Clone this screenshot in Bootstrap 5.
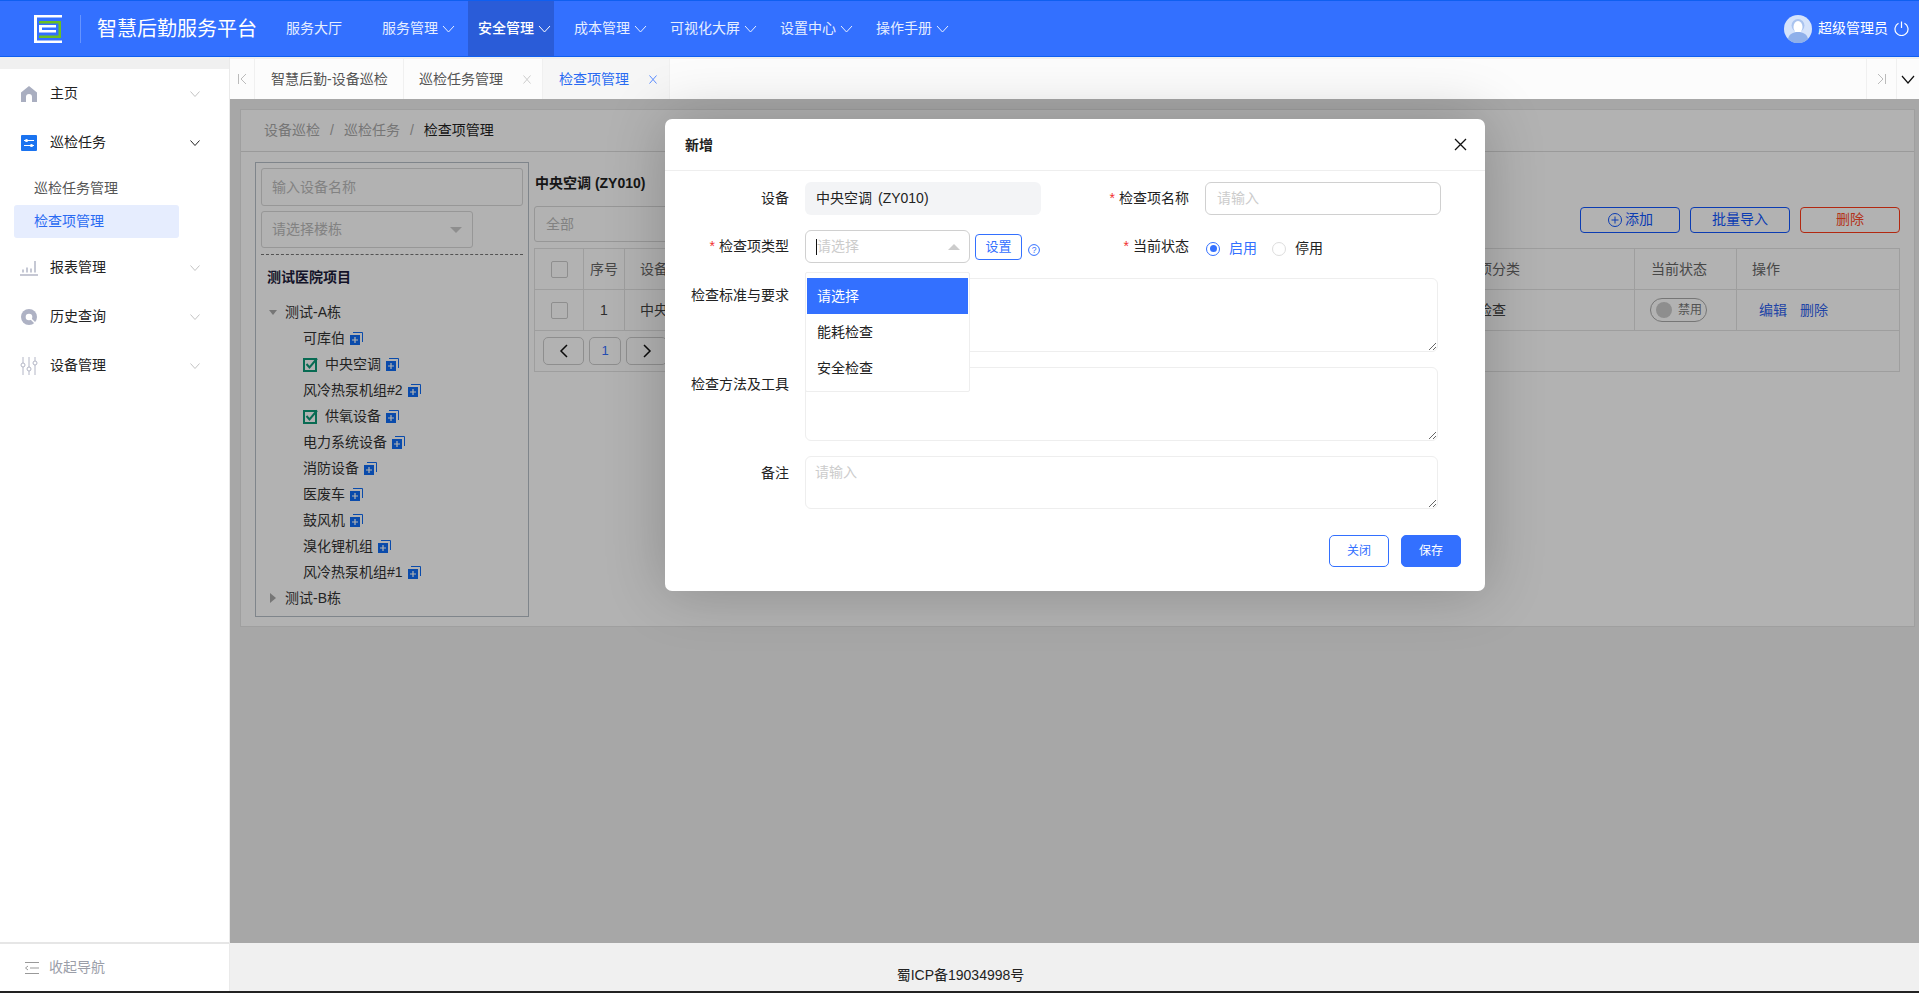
<!doctype html>
<html lang="zh">
<head>
<meta charset="utf-8">
<title>智慧后勤服务平台</title>
<link rel="stylesheet" href="https://cdn.jsdelivr.net/npm/bootstrap@5.3.0/dist/css/bootstrap.min.css">
<style>
html,body{height:100%;overflow:hidden}
body{font-family:"Liberation Sans","Noto Sans CJK SC",sans-serif;font-size:14px;color:#333;background:#f0f0f0;display:flex;flex-direction:column;border-bottom:2px solid #222}
svg{display:block;flex:none}
.topbar{height:57px;flex:none;background:#3370ff;border-top:1px solid #0f5ff0;border-bottom:1px solid #0f5ff0;color:#fff;padding:0 10px 0 34px;display:flex;align-items:center}
.brand-sep{width:1px;height:28px;background:rgba(255,255,255,.25);margin:0 16px 0 18px}
.brand-name{font-size:20px;line-height:28px;white-space:nowrap;margin-right:19px}
.top-item{height:55px;display:flex;align-items:center;gap:4px;padding:0 3px 0 10px;margin-right:10px;color:#e6eeff;white-space:nowrap}
.top-item svg{width:13px;height:8px}
.top-plain{width:86px}
.top-item.is-on{background:#2a5cd8;color:#fff;font-weight:500}
.top-user{margin-left:auto;display:flex;align-items:center;gap:6px}
.shell{flex:1;min-height:0;display:flex}
.side{width:230px;flex:none;display:flex;flex-direction:column;padding-top:12px;background:#f0f0f0;border-right:1px solid #eaeaea}
.side-body{flex:1;background:#fff}
.side-row{height:49px;display:flex;align-items:center;padding:0 29px 0 21px;color:#222;gap:13px}
.side-row span{flex:1}
.side-row .chev{width:10px;height:6px}
.side-row .ico-wide{margin:0 -1px}
.side-sub{height:33px;margin:0 50px 0 14px;padding-left:20px;display:flex;align-items:center;color:#555;border-radius:3px}
.side-sub.sub-first{margin-top:5px}
.side-sub.is-on{background:#e6edfe;color:#2a6bf2}
.side-after{margin-top:5px}
.side-foot{height:49px;background:#fff;border-top:2px solid #e6e6e6;display:flex;align-items:center;padding-left:24px;gap:9px;color:#9b9ea8;flex:none}
.work{flex:1;min-width:0;display:flex;flex-direction:column}
.tabbar{height:40px;flex:none;margin-top:2px;background:#fcfcfc;display:flex;align-items:stretch;color:#555}
.tab-edge{width:25px;display:flex;align-items:center;justify-content:center;border-right:1px solid #f0f0f0}
.tab-cell{display:flex;align-items:center;border-right:1px solid #f0f0f0;white-space:nowrap}
.tab-a{width:149px;padding-left:16px}
.tab-b{width:139px;padding-left:15px;gap:20px}
.tab-c{width:127px;padding-left:16px;gap:20px;background:#f6f6f6;color:#2a6bf2}
.tab-tail{margin-left:auto;display:flex}
.tab-tail>div{width:30px;display:flex;align-items:center;justify-content:center;border-left:1px solid #f0f0f0}
.tab-tail>div+div{width:23px}
.stage{flex:1;min-height:0;position:relative;padding:10px 4px 0 10px;background:#f0f0f0}
.dim{position:absolute;inset:0;background:rgba(0,0,0,.3)}
.panel{height:518px;background:#fff;border:1px solid #e4e4e4;display:flex;flex-direction:column}
.crumbs{height:42px;flex:none;border-bottom:1px solid #ddd;display:flex;align-items:center;padding-left:23px;color:#aaa;gap:10px}
.crumbs b{font-weight:400;color:#222}
.panel-main{display:flex;flex:1;padding:10px 15px 0 14px;gap:5px}
.tree{width:274px;height:455px;flex:none;border:1px solid #b6bfc7;padding:5px;font-size:14px;color:#333}
.fake-input{height:38px;border:1px solid #d8d8d8;border-radius:3px;padding:0 10px;display:flex;align-items:center;color:#bbb}
.fake-select{width:212px;margin-top:5px;height:37px;justify-content:space-between;padding-right:10px}
.tri{width:0;height:0;border-left:6px solid transparent;border-right:6px solid transparent;border-bottom:6px solid #ccc}
.tri-d{border-bottom:0;border-top:6px solid #ccc}
.tree-sep{border-top:1px dashed #777;margin-top:6px}
.tree-root{font-weight:700;color:#1c1c3a;margin:12px 0 0 6px;line-height:20px}
.tree-list{margin:12px 0 0 0;padding:0;list-style:none}
.tree-list li{height:26px;display:flex;align-items:center;padding-left:42px;gap:5px;white-space:nowrap}
.tree-list li.tree-top{padding-left:8px;gap:8px}
.tree-list li .txt-gap{margin-left:2px}
.add-ico{margin-top:1px}
.gridside{flex:1;min-width:0}
.grid-title{font-weight:700;color:#222;line-height:20px;margin-top:11px;margin-left:1px}
.grid-bar{display:flex;align-items:center;height:36px;margin-top:13px;position:relative}
.grid-filter{width:400px;height:36px;border:1px solid #d8d8d8;border-radius:3px;padding-left:11px;display:flex;align-items:center;color:#bbb}
.grid-btns{margin-left:auto;display:flex;gap:10px;margin-top:-9px;margin-right:-1px}
.act{width:100px;height:26px;padding:0;font-size:14px;border-radius:4px;display:flex;align-items:center;justify-content:center;gap:2px;background:transparent;border:1px solid #1056ff;color:#1056ff}
.act-del{border-color:#ff3a18;color:#ff4a2a}
.gridtable{table-layout:fixed;width:1365px;border-collapse:collapse;margin:6px 0 0 0;color:#444}
.gridtable th,.gridtable td{border:1px solid #e2e2e2;height:41px;padding:0;font-weight:400;vertical-align:middle;white-space:nowrap;overflow:hidden}
.gridtable th{color:#666}
.gridtable .chk{width:17px;height:17px;border:1px solid #ccc;border-radius:2px;margin:auto}
.pad-l{padding-left:15px!important}
.switchy{width:57px;height:24px;border:1px solid #aaa;border-radius:12px;display:flex;align-items:center;padding-left:5px;gap:6px;font-size:12px;color:#777;margin-left:15px}
.switchy i{width:16px;height:16px;border-radius:50%;background:#ccc}
.lnk{color:#2f62ee;text-decoration:none}
.lnk+.lnk{margin-left:13px}
.op-links{margin-left:22px}
.pgr{display:flex;gap:5px;padding-left:8px;align-items:center}
.pgr span{height:28px;border:1px solid #ccc;border-radius:5px;display:flex;align-items:center;justify-content:center}
.pgr .wide{width:41px}
.pgr .nar{width:32px;color:#3370ff;font-size:13px}
.site-foot{height:48px;flex:none;background:#f0f0f0;color:#222;display:flex;align-items:flex-end;justify-content:center;padding:0 0 6px 0;font-size:14px;line-height:20px}
.site-foot span{transform:translateX(-114px)}
.dlg.modal-content{position:absolute;left:435px;top:20px;width:820px;height:472px;border:0;border-radius:7px;background:#fff;box-shadow:0 0 60px rgba(0,0,0,.22);color:#222}
.dlg .modal-header{height:52px;padding:0 18px 0 20px;border-bottom:1px solid #eee;display:flex;justify-content:space-between;align-items:center}
.dlg .modal-title{font-size:14px;font-weight:700;line-height:20px;color:#222}
.x-btn{background:none;border:0;padding:0}
.dlg .modal-body{padding:0;position:relative}
.frow{display:flex;margin-top:15px}
.frow.first{margin-top:11px}
.flab{width:124px;flex:none;text-align:right;white-space:nowrap}
.flab em{color:#f23030;font-style:normal;margin-right:4px}
.fslot{margin-left:16px}
.field{height:33px;width:236px;border-radius:6px;display:flex;align-items:center;padding:0 11px}
.field-ro{background:#f3f4f6;color:#222;gap:6px}
.field-in{border:1px solid #d0d0d0;color:#ccc}
.col-a{display:flex;align-items:center;width:400px}
.col-b{display:flex;align-items:center}
.sel{width:165px;height:33px;border:1px solid #d0d0d0;border-radius:6px;display:flex;align-items:center;justify-content:space-between;padding:0 9px 0 11px;color:#ccc}
.caret-bar{width:1px;height:16px;background:#111;position:absolute;margin-left:-1px}
.setbtn{width:47px;height:26px;margin-left:5px;padding:0;font-size:13px;border:1px solid #3370ff;color:#3370ff;background:#fff;border-radius:4px;line-height:24px}
.help-ico{margin:6px 0 0 6px}
.radio-set{display:flex;align-items:center;gap:9px;margin-left:17px;padding-top:4px;color:#222}
.radio-set .on{color:#3370ff}
.dot{width:14px;height:14px;border:1px solid #ddd;border-radius:50%;flex:none;display:flex;align-items:center;justify-content:center}
.dot.off{margin-left:6px}
.dot.is-on{border-color:#3370ff}
.dot.is-on::after{content:"";width:7px;height:7px;background:#3370ff;border-radius:50%}
.ta{width:633px;resize:vertical;border:1px solid #eee;border-radius:6px;padding:5px 9px;display:block;font-size:14px;outline:0;box-shadow:none}
.ta::placeholder{color:#ccc}
.ta-a{height:74px}
.ta-b{height:53px}
.flab-t{padding-top:7px}
.dd{position:absolute;left:140px;top:101px;width:165px;height:120px;background:#fff;border:1px solid #eee;border-radius:2px;padding:5px 0;margin:0;list-style:none;color:#222;z-index:3}
.dd li{height:36px;display:flex;align-items:center;padding-left:11px}
.dd li.is-on{background:#3370ff;color:#fff;margin:0 1px;padding-left:10px}
.dlg .modal-footer{position:absolute;left:0;right:0;bottom:24px;padding:0 24px 0 0;border:0;gap:12px;display:flex;justify-content:flex-end}
.dlg .modal-footer .btn{width:60px;height:32px;margin:0;padding:0;font-size:12px;border-radius:5px}
.btn-line{border:1px solid #3370ff;background:#fff;color:#3370ff}
.btn-fill{border:1px solid #3370ff;background:#3370ff;color:#fff}
</style>
</head>
<body>
<header class="topbar">
  <svg width="28" height="28" viewBox="0 0 28 28"><path d="M0 0H28V2.500H3V25.500H28V28H0Z" fill="#fff"/><path d="M5 6H27V23H5V20.500H24.500V8.500H5Z" fill="#6cc01f"/><path d="M5 10H22V12.500H8V15H22V17.500H5Z" fill="#fff"/></svg>
  <div class="brand-sep"></div>
  <div class="brand-name">智慧后勤服务平台</div>
  <div class="top-item top-plain">服务大厅</div>
  <div class="top-item">服务管理<svg viewBox="0 0 13 8"><path d="M1 1l5.500 6L12 1" fill="none" stroke="#e6eeff"/></svg></div>
  <div class="top-item is-on">安全管理<svg viewBox="0 0 13 8"><path d="M1 1l5.500 6L12 1" fill="none" stroke="#fff"/></svg></div>
  <div class="top-item">成本管理<svg viewBox="0 0 13 8"><path d="M1 1l5.500 6L12 1" fill="none" stroke="#e6eeff"/></svg></div>
  <div class="top-item">可视化大屏<svg viewBox="0 0 13 8"><path d="M1 1l5.500 6L12 1" fill="none" stroke="#e6eeff"/></svg></div>
  <div class="top-item">设置中心<svg viewBox="0 0 13 8"><path d="M1 1l5.500 6L12 1" fill="none" stroke="#e6eeff"/></svg></div>
  <div class="top-item">操作手册<svg viewBox="0 0 13 8"><path d="M1 1l5.500 6L12 1" fill="none" stroke="#e6eeff"/></svg></div>
  <div class="top-user">
    <svg width="28" height="28" viewBox="0 0 28 28"><circle cx="14" cy="14" r="14" fill="#d5e3fb"/><ellipse cx="14" cy="10.500" rx="6.500" ry="6.500" fill="#a9c3ef"/><ellipse cx="14" cy="12" rx="4.500" ry="6" fill="#fff"/><path d="M4 24c1-5 5-7 10-7s9 2 10 7a14 14 0 0 1-20 0Z" fill="#8fb0ea"/></svg>
    <span>超级管理员</span>
    <svg width="15" height="15" viewBox="0 0 15 15" fill="none" stroke="#fff" stroke-width="1.200"><path d="M4.500 2.300a6.500 6.500 0 1 0 6 0"/><path d="M7.500 .5v6.500"/></svg>
  </div>
</header>
<div class="shell">
  <aside class="side">
    <div class="side-body">
      <div class="side-row"><svg width="16" height="16" viewBox="0 0 16 16"><path d="M8 0l8 6.500V16h-5v-5a3 3 0 0 0-6 0v5H0V6.500Z" fill="#a9aec0"/></svg><span>主页</span><svg class="chev" viewBox="0 0 10 6"><path d="M.5.500l4.500 5 4.500-5" fill="none" stroke="#c4c4c4"/></svg></div>
      <div class="side-row"><svg width="16" height="16" viewBox="0 0 16 16"><rect width="16" height="16" rx="1" fill="#1a73f0"/><path d="M3 5.500h10M3 10.500h10" stroke="#fff"/><circle cx="5.500" cy="5.500" r="1.600" fill="#fff"/><circle cx="10.500" cy="10.500" r="1.600" fill="#fff"/></svg><span>巡检任务</span><svg class="chev" viewBox="0 0 10 6"><path d="M.5.500l4.500 5 4.500-5" fill="none" stroke="#222"/></svg></div>
      <div class="side-sub sub-first">巡检任务管理</div>
      <div class="side-sub is-on">检查项管理</div>
      <div class="side-row side-after"><svg class="ico-wide" width="18" height="16" viewBox="0 0 18 16"><path d="M0 15h18" stroke="#b3b6c6" stroke-width="1.500"/><path d="M3 12.500v-3M7 12.500v-5M11 12.500v-4M15 12.500V1" stroke="#b3b6c6" stroke-width="1.500"/></svg><span>报表管理</span><svg class="chev" viewBox="0 0 10 6"><path d="M.5.500l4.500 5 4.500-5" fill="none" stroke="#c4c4c4"/></svg></div>
      <div class="side-row"><svg width="16" height="16" viewBox="0 0 16 16"><circle cx="8" cy="8" r="8" fill="#aeb2c4"/><circle cx="8" cy="8" r="3.300" fill="#fff"/><path d="M10 10l4 4" stroke="#fff" stroke-width="1.500"/></svg><span>历史查询</span><svg class="chev" viewBox="0 0 10 6"><path d="M.5.500l4.500 5 4.500-5" fill="none" stroke="#c4c4c4"/></svg></div>
      <div class="side-row"><svg class="ico-wide" width="18" height="18" viewBox="0 0 18 18" fill="none" stroke="#b3b6c6"><path d="M3 0v6M3 10v8M9 0v10M9 14v4M15 0v4M15 8v10"/><circle cx="3" cy="8" r="2"/><circle cx="9" cy="12" r="2"/><circle cx="15" cy="6" r="2"/></svg><span>设备管理</span><svg class="chev" viewBox="0 0 10 6"><path d="M.5.500l4.500 5 4.500-5" fill="none" stroke="#c4c4c4"/></svg></div>
    </div>
    <div class="side-foot"><svg width="16" height="14" viewBox="0 0 16 14" fill="none" stroke="#999"><path d="M1 1.500h14M6 7h9M1 12.500h14"/><path d="M4 5L1.500 7 4 9"/></svg><span>收起导航</span></div>
  </aside>
  <div class="work">
    <div class="tabbar">
      <div class="tab-edge"><svg width="11" height="12" viewBox="0 0 11 12" fill="none" stroke="#bbb"><path d="M1.500 1v10M9 1L4 6l5 5"/></svg></div>
      <div class="tab-cell tab-a">智慧后勤-设备巡检</div>
      <div class="tab-cell tab-b">巡检任务管理<svg width="8" height="9" viewBox="0 0 8 9" fill="none" stroke="#ccc"><path d="M.5.500l7 8M7.500.5l-7 8"/></svg></div>
      <div class="tab-cell tab-c">检查项管理<svg width="8" height="9" viewBox="0 0 8 9" fill="none" stroke="#5b8cff"><path d="M.5.500l7 8M7.500.5l-7 8"/></svg></div>
      <div class="tab-tail">
        <div><svg width="11" height="12" viewBox="0 0 11 12" fill="none" stroke="#bbb"><path d="M9.500 1v10M2 1l5 5-5 5"/></svg></div>
        <div><svg width="14" height="9" viewBox="0 0 14 9" fill="none" stroke="#111" stroke-width="1.200"><path d="M1 1l6 7 6-7"/></svg></div>
      </div>
    </div>
    <div class="stage">
      <div class="panel">
        <div class="crumbs"><span>设备巡检</span><span>/</span><span>巡检任务</span><span>/</span><b>检查项管理</b></div>
        <div class="panel-main">
          <div class="tree">
            <div class="fake-input">输入设备名称</div>
            <div class="fake-input fake-select"><span>请选择楼栋</span><i class="tri tri-d"></i></div>
            <div class="tree-sep"></div>
            <div class="tree-root">测试医院项目</div>
            <ul class="tree-list">
              <li class="tree-top"><svg width="8" height="5" viewBox="0 0 8 5"><path d="M0 0h8L4 5Z" fill="#aaa"/></svg>测试-A栋</li>
              <li>可库伯<svg class="add-ico" width="13" height="13" viewBox="0 0 13 13"><path d="M3 .500h9.500V10" fill="none" stroke="#0f6cf5"/><rect y="3" width="10" height="10" fill="#0f6cf5"/><path d="M2 8h6M5 5v6" stroke="#fff" stroke-width="1.200"/></svg></li>
              <li><svg width="15" height="15" viewBox="0 0 15 15"><rect x="1" y="2" width="12" height="12" fill="none" stroke="#0c9a78" stroke-width="2"/><path d="M3.500 7l3 3.500L14 1.500" fill="none" stroke="#0c9a78" stroke-width="2"/></svg><span class="txt-gap">中央空调</span><svg class="add-ico" width="13" height="13" viewBox="0 0 13 13"><path d="M3 .500h9.500V10" fill="none" stroke="#0f6cf5"/><rect y="3" width="10" height="10" fill="#0f6cf5"/><path d="M2 8h6M5 5v6" stroke="#fff" stroke-width="1.200"/></svg></li>
              <li>风冷热泵机组#2<svg class="add-ico" width="13" height="13" viewBox="0 0 13 13"><path d="M3 .500h9.500V10" fill="none" stroke="#0f6cf5"/><rect y="3" width="10" height="10" fill="#0f6cf5"/><path d="M2 8h6M5 5v6" stroke="#fff" stroke-width="1.200"/></svg></li>
              <li><svg width="15" height="15" viewBox="0 0 15 15"><rect x="1" y="2" width="12" height="12" fill="none" stroke="#0c9a78" stroke-width="2"/><path d="M3.500 7l3 3.500L14 1.500" fill="none" stroke="#0c9a78" stroke-width="2"/></svg><span class="txt-gap">供氧设备</span><svg class="add-ico" width="13" height="13" viewBox="0 0 13 13"><path d="M3 .500h9.500V10" fill="none" stroke="#0f6cf5"/><rect y="3" width="10" height="10" fill="#0f6cf5"/><path d="M2 8h6M5 5v6" stroke="#fff" stroke-width="1.200"/></svg></li>
              <li>电力系统设备<svg class="add-ico" width="13" height="13" viewBox="0 0 13 13"><path d="M3 .500h9.500V10" fill="none" stroke="#0f6cf5"/><rect y="3" width="10" height="10" fill="#0f6cf5"/><path d="M2 8h6M5 5v6" stroke="#fff" stroke-width="1.200"/></svg></li>
              <li>消防设备<svg class="add-ico" width="13" height="13" viewBox="0 0 13 13"><path d="M3 .500h9.500V10" fill="none" stroke="#0f6cf5"/><rect y="3" width="10" height="10" fill="#0f6cf5"/><path d="M2 8h6M5 5v6" stroke="#fff" stroke-width="1.200"/></svg></li>
              <li>医废车<svg class="add-ico" width="13" height="13" viewBox="0 0 13 13"><path d="M3 .500h9.500V10" fill="none" stroke="#0f6cf5"/><rect y="3" width="10" height="10" fill="#0f6cf5"/><path d="M2 8h6M5 5v6" stroke="#fff" stroke-width="1.200"/></svg></li>
              <li>鼓风机<svg class="add-ico" width="13" height="13" viewBox="0 0 13 13"><path d="M3 .500h9.500V10" fill="none" stroke="#0f6cf5"/><rect y="3" width="10" height="10" fill="#0f6cf5"/><path d="M2 8h6M5 5v6" stroke="#fff" stroke-width="1.200"/></svg></li>
              <li>溴化锂机组<svg class="add-ico" width="13" height="13" viewBox="0 0 13 13"><path d="M3 .500h9.500V10" fill="none" stroke="#0f6cf5"/><rect y="3" width="10" height="10" fill="#0f6cf5"/><path d="M2 8h6M5 5v6" stroke="#fff" stroke-width="1.200"/></svg></li>
              <li>风冷热泵机组#1<svg class="add-ico" width="13" height="13" viewBox="0 0 13 13"><path d="M3 .500h9.500V10" fill="none" stroke="#0f6cf5"/><rect y="3" width="10" height="10" fill="#0f6cf5"/><path d="M2 8h6M5 5v6" stroke="#fff" stroke-width="1.200"/></svg></li>
              <li class="tree-top"><svg width="8" height="10" viewBox="0 0 8 10"><path d="M1 0l6 5-6 5Z" fill="#aaa"/></svg>测试-B栋</li>
            </ul>
          </div>
          <div class="gridside">
            <div class="grid-title">中央空调 (ZY010)</div>
            <div class="grid-bar">
              <div class="grid-filter">全部</div>
              <div class="grid-btns">
                <button class="act" type="button"><svg width="16" height="16" viewBox="0 0 16 16" fill="none" stroke="#1056ff"><circle cx="8" cy="8" r="6.500"/><path d="M4.500 8h7M8 4.500v7"/></svg>添加</button>
                <button class="act" type="button">批量导入</button>
                <button class="act act-del" type="button">删除</button>
              </div>
            </div>
            <table class="gridtable">
              <colgroup><col style="width:49px"><col style="width:41px"><col style="width:810px"><col style="width:200px"><col style="width:102px"><col style="width:163px"></colgroup>
              <tr><th><div class="chk"></div></th><th class="text-center">序号</th><th class="pad-l">设备名称</th><th class="pad-l">检查项分类</th><th><span class="ms-3">当前状态</span></th><th class="pad-l">操作</th></tr>
              <tr><td><div class="chk"></div></td><td class="text-center">1</td><td class="pad-l">中央空调</td><td class="pad-l">能耗检查</td><td><div class="switchy"><i></i>禁用</div></td><td><div class="op-links"><a class="lnk" href="#">编辑</a><a class="lnk" href="#">删除</a></div></td></tr>
              <tr><td colspan="6"><div class="pgr"><span class="wide"><svg width="10" height="14" viewBox="0 0 10 14" fill="none" stroke="#111" stroke-width="1.500"><path d="M8 1L2 7l6 6"/></svg></span><span class="nar">1</span><span class="wide"><svg width="10" height="14" viewBox="0 0 10 14" fill="none" stroke="#111" stroke-width="1.500"><path d="M2 1l6 6-6 6"/></svg></span></div></td></tr>
            </table>
          </div>
        </div>
      </div>
      <div class="dim"></div>
      <div class="modal-content dlg">
        <div class="modal-header"><div class="modal-title">新增</div><button type="button" class="x-btn" aria-label="关闭"><svg width="13" height="13" viewBox="0 0 13 13" fill="none" stroke="#111" stroke-width="1.300"><path d="M1 1l11 11M12 1L1 12"/></svg></button></div>
        <div class="modal-body">
          <div class="frow first">
            <div class="col-a"><div class="flab">设备</div><div class="fslot field field-ro"><span>中央空调</span><span>(ZY010)</span></div></div>
            <div class="col-b"><div class="flab"><em>*</em>检查项名称</div><div class="fslot field field-in">请输入</div></div>
          </div>
          <div class="frow">
            <div class="col-a"><div class="flab"><em>*</em>检查项类型</div><div class="fslot sel"><i class="caret-bar"></i><span>请选择</span><i class="tri"></i></div><button class="setbtn" type="button">设置</button><svg class="help-ico" width="12" height="12" viewBox="0 0 12 12"><circle cx="6" cy="6" r="5.400" fill="none" stroke="#3370ff"/><text x="6" y="9" font-size="8.500" text-anchor="middle" fill="#3370ff" font-family="Liberation Sans">?</text></svg></div>
            <div class="col-b"><div class="flab"><em>*</em>当前状态</div><div class="radio-set"><i class="dot is-on"></i><span class="on">启用</span><i class="dot off"></i><span>停用</span></div></div>
          </div>
          <div class="frow"><div class="flab flab-t">检查标准与要求</div><textarea class="fslot ta ta-a"></textarea></div>
          <div class="frow"><div class="flab flab-t">检查方法及工具</div><textarea class="fslot ta ta-a"></textarea></div>
          <div class="frow"><div class="flab flab-t">备注</div><textarea class="fslot ta ta-b" placeholder="请输入"></textarea></div>
          <ul class="dd"><li class="is-on">请选择</li><li>能耗检查</li><li>安全检查</li></ul>
        </div>
        <div class="modal-footer"><button type="button" class="btn btn-line">关闭</button><button type="button" class="btn btn-fill">保存</button></div>
      </div>
    </div>
    <div class="site-foot"><span>蜀ICP备19034998号</span></div>
  </div>
</div>
<script src="https://cdn.jsdelivr.net/npm/bootstrap@5.3.0/dist/js/bootstrap.bundle.min.js"></script>
</body>
</html>
